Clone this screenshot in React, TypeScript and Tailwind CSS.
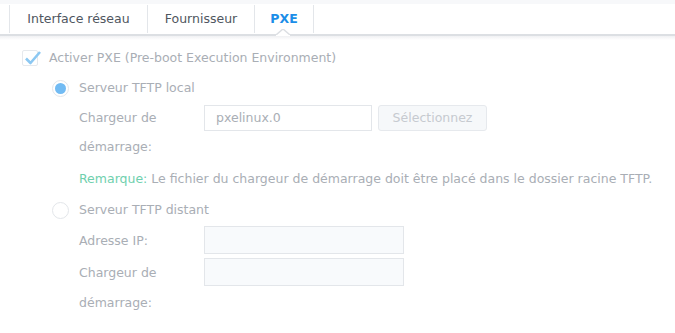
import React from "react";

const font = { fontFamily: '"DejaVu Sans", Verdana, sans-serif' };

function Check() {
  return (
    <div className="relative w-[16px] h-[16px] border border-[#e6e9ed] rounded-[2px] bg-white">
      <svg className="absolute left-[1px] top-[-1px]" width="18" height="16" viewBox="0 0 18 16">
        <path d="M2 8.5 L6.5 13 L16 2" fill="none" stroke="#8cc8f2" strokeWidth="2.6" strokeLinejoin="round" />
      </svg>
    </div>
  );
}

function Radio({ on }: { on?: boolean }) {
  return (
    <div className="w-[17px] h-[17px] rounded-full border border-[#e3e6ea] bg-white flex items-center justify-center">
      {on && <div className="w-[11px] h-[11px] rounded-full bg-[#72bbf3]" />}
    </div>
  );
}

export default function App() {
  return (
    <div className="w-[675px] h-[333px] bg-white text-[12.5px] text-[#a9aeb5] overflow-hidden" style={font}>
      <div className="h-[4px] bg-[#f7f8fa]" />
      <div className="relative h-[32px] flex items-center pl-[9px] border-b-2 border-[#dcdfe3] bg-white">
        <div className="w-px h-[28px] bg-[#e3e6ea]" />
        <div className="w-[137px] text-center text-[#4f5660] text-[12.5px]">Interface réseau</div>
        <div className="w-px h-[28px] bg-[#e3e6ea]" />
        <div className="w-[106px] text-center text-[#4f5660] text-[12.5px]">Fournisseur</div>
        <div className="w-px h-[28px] bg-[#e3e6ea]" />
        <div className="w-[58px] text-center text-[#1b8ee8] font-bold text-[12.5px]">PXE</div>
        <div className="w-px h-[28px] bg-[#e3e6ea]" />
        <svg className="absolute left-[276px] bottom-[-2px]" width="14" height="7" viewBox="0 0 14 7">
          <path d="M0 6 L7 0 L14 6" fill="white" stroke="#dcdfe3" strokeWidth="1.5" />
          <rect x="0" y="6" width="14" height="1" fill="white" />
        </svg>
      </div>
      <div className="h-[4px] bg-gradient-to-b from-[#f0f1f3] to-white" />
      <div className="pl-[22px]">
        <div className="h-[28px] mt-[4px] flex items-center gap-[11px]">
          <Check />
          <span>Activer PXE (Pre-boot Execution Environment)</span>
        </div>
        <div className="pl-[30px]">
          <div className="h-[28px] mt-[2px] flex items-center gap-[10px]">
            <Radio on />
            <span>Serveur TFTP local</span>
          </div>
          <div className="pl-[27px]">
            <div className="flex mt-[1px]">
              <div className="w-[125px] leading-[29px]">
                <div>Chargeur de</div>
                <div>démarrage:</div>
              </div>
              <div className="flex gap-[6px] mt-[2px] h-[26px]">
                <div className="w-[168px] border border-[#e3e6ea] bg-white pl-[11px] flex items-center">pxelinux.0</div>
                <div className="w-[109px] border border-[#e6e9ed] bg-[#f6f8fa] rounded-[3px] flex items-center justify-center text-[#c6cad0]">Sélectionnez</div>
              </div>
            </div>
            <div className="h-[28px] mt-[4px] flex items-center">
              <span className="text-[#6fd0ae]">Remarque:</span>
              <span>&nbsp;Le fichier du chargeur de démarrage doit être placé dans le dossier racine TFTP.</span>
            </div>
          </div>
          <div className="h-[28px] mt-[3px] flex items-center gap-[10px]">
            <Radio />
            <span>Serveur TFTP distant</span>
          </div>
          <div className="pl-[27px]">
            <div className="flex mt-[2px] h-[30px]">
              <div className="w-[125px] leading-[29px]">Adresse IP:</div>
              <div className="w-[200px] h-[28px] border border-[#e3e6ea] bg-[#f8fafc]" />
            </div>
            <div className="flex mt-[2px]">
              <div className="w-[125px] leading-[30px]">
                <div>Chargeur de</div>
                <div>démarrage:</div>
              </div>
              <div className="w-[200px] h-[28px] border border-[#e3e6ea] bg-[#f8fafc]" />
            </div>
          </div>
        </div>
      </div>
    </div>
  );
}
